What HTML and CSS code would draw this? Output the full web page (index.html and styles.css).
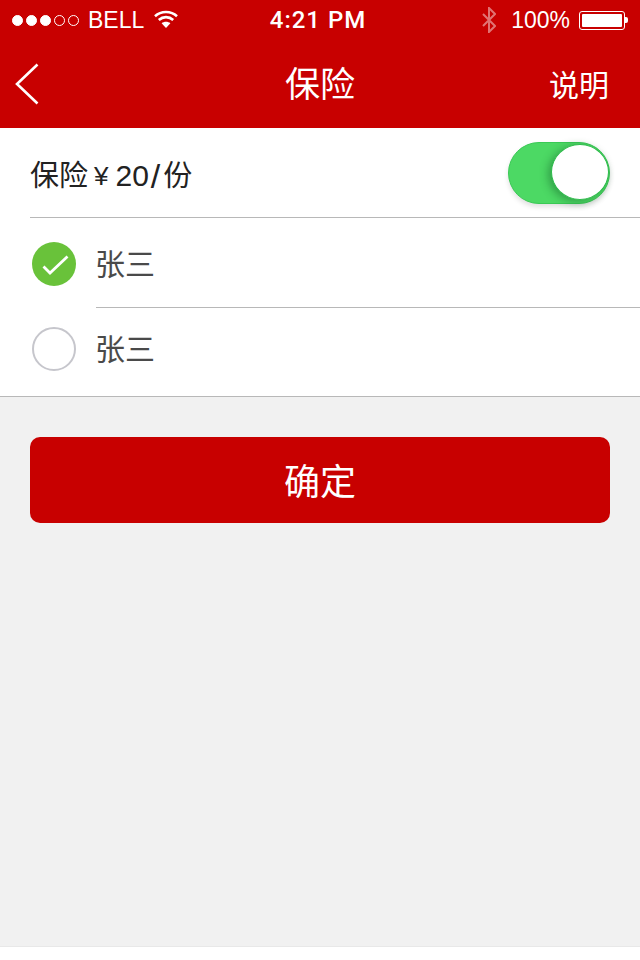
FILE: index.html
```html
<!DOCTYPE html>
<html lang="zh-CN">

<head>
    <meta charset="UTF-8" />
    <meta name="viewport" content="width=device-width, initial-scale=1.0" />
    <title>保险</title>
    <link rel="stylesheet" href="styles.css">
</head>

<body>
    <header class="header">
        <div class="status-bar">
            <div class="status-left">
                <div class="signal">
                    <span class="dot on"></span>
                    <span class="dot on"></span>
                    <span class="dot on"></span>
                    <span class="dot"></span>
                    <span class="dot"></span>
                </div>
                <span class="carrier">BELL</span>
                <svg class="wifi" width="24" height="18" viewBox="0 0 24 18">
                    <path d="M1 6.2C7 .6 17 .6 23 6.2" fill="none" stroke="#fff" stroke-width="2.6" />
                    <path d="M4.8 10C9 6.2 15 6.2 19.2 10" fill="none" stroke="#fff" stroke-width="2.6" />
                    <path d="M12 18L7.6 13.2C10 11.2 14 11.2 16.4 13.2Z" fill="#fff" />
                </svg>
            </div>
            <div class="time">4:21 PM</div>
            <div class="status-right">
                <svg class="bluetooth" width="14" height="26" viewBox="0 0 14 26">
                    <path d="M1 7L13 19L7 25V1L13 7L1 19" fill="none" stroke="#fff" stroke-width="2" />
                </svg>
                <span class="percent">100%</span>
                <div class="battery">
                    <div class="battery-body"><div class="battery-fill"></div></div>
                    <div class="battery-nub"></div>
                </div>
            </div>
        </div>
        <nav class="nav-bar">
            <svg class="back" width="24" height="42" viewBox="0 0 24 42">
                <path d="M22.5 1.5L2 21L22.5 40.5" fill="none" stroke="#fff" stroke-width="2.6" />
            </svg>
            <h1 class="title">保险</h1>
            <a class="nav-action">说明</a>
        </nav>
    </header>

    <main class="page">
        <section class="list">
            <div class="insurance-row">
                <div class="insurance-label">
                    <span>保险</span>
                    <span class="yen">¥</span>
                    <span class="price">20</span>
                    <span class="slash">/</span>
                    <span>份</span>
                </div>
                <div class="toggle"><div class="knob"></div></div>
            </div>
            <div class="person-row">
                <span class="check checked">
                    <svg width="44" height="44" viewBox="0 0 44 44">
                        <path d="M11.5 24.5L18 31L35.5 14.5" fill="none" stroke="#fff" stroke-width="2.8" />
                    </svg>
                </span>
                <span class="person-name">张三</span>
            </div>
            <div class="person-row last">
                <span class="check"></span>
                <span class="person-name">张三</span>
            </div>
        </section>
        <button class="confirm">确定</button>
    </main>
</body>

</html>
```

FILE: styles.css
```css
* {
    box-sizing: border-box;
}

body {
    margin: 0;
    background-color: #fff;
    font-family: "Liberation Sans", "Noto Sans CJK SC", sans-serif;
    color: #1f1f1f;
}

.header {
    background-color: #c80000;
    color: #fff;
    height: 128px;
}

.status-bar {
    height: 40px;
    display: grid;
    grid-template-columns: 1fr auto 1fr;
    align-items: center;
    padding: 0 12px;
}

.status-left,
.status-right {
    display: flex;
    align-items: center;
}

.status-right {
    justify-content: flex-end;
}

.signal {
    display: flex;
    gap: 3px;
}

.dot {
    width: 11px;
    height: 11px;
    border: 1px solid #fff;
    border-radius: 50%;
}

.dot.on {
    background-color: #fff;
}

.carrier {
    font-size: 23px;
    margin-left: 9px;
}

.wifi {
    margin-left: 10px;
    margin-bottom: 2px;
}

.time {
    font-family: Roboto, sans-serif;
    font-weight: 500;
    font-size: 24px;
    letter-spacing: 1px;
    margin-right: 4px;
}

.bluetooth {
    opacity: 0.45;
    margin-right: 15px;
}

.percent {
    font-size: 23px;
    margin-right: 9px;
}

.battery {
    display: flex;
    align-items: center;
}

.battery-body {
    width: 46px;
    height: 19px;
    border: 1px solid #fff;
    border-radius: 3px;
    padding: 2px;
}

.battery-fill {
    height: 100%;
    background-color: #fff;
    border-radius: 1px;
}

.battery-nub {
    width: 3px;
    height: 6px;
    background-color: #fff;
    border-radius: 0 2px 2px 0;
}

.nav-bar {
    height: 88px;
    display: grid;
    grid-template-columns: 1fr auto 1fr;
    align-items: center;
    padding: 0 31px 0 15px;
}

.back {
    margin-top: -1px;
}

.title {
    margin: 0 0 0 16px;
    font-size: 35px;
    font-weight: 400;
    line-height: 1;
}

.nav-action {
    justify-self: end;
    margin-top: 4px;
    font-size: 30px;
    line-height: 1;
}

.page {
    height: 819px;
    background-color: #f1f1f1;
    border-bottom: 1px solid #e8e8e8;
    display: flex;
    flex-direction: column;
}

.list {
    background-color: #fff;
    border-bottom: 1px solid #b8b8b8;
}

.insurance-row {
    height: 90px;
    margin-left: 30px;
    padding-right: 30px;
    border-bottom: 1px solid #b8b8b8;
    display: flex;
    align-items: center;
    justify-content: space-between;
}

.insurance-label {
    display: flex;
    align-items: center;
    margin-top: 7px;
    font-size: 29px;
    line-height: 1;
    color: #222;
}

.yen {
    margin: 0 7px 0 6px;
    font-size: 26px;
}

.price {
    font-size: 30px;
}

.slash {
    margin: 0 3px 0 2px;
    font-size: 34px;
}

.toggle {
    width: 102px;
    height: 62px;
    margin-top: 1px;
    background-color: #4cd964;
    border: 1px solid #3ac955;
    border-radius: 31px;
    padding: 1px 0 4px 42px;
    box-shadow: 0 3px 5px rgba(0, 0, 0, 0.12);
}

.knob {
    width: 58px;
    height: 56px;
    background-color: #fff;
    border: 1px solid #2dbb4a;
    border-radius: 50%;
    box-shadow: -3px 2px 8px rgba(20, 90, 40, 0.45);
}

.person-row {
    display: flex;
    align-items: center;
    padding-left: 32px;
}

.check {
    width: 44px;
    height: 44px;
    flex-shrink: 0;
    margin-top: 2px;
    border: 2px solid #c6c6cc;
    border-radius: 50%;
}

.check.checked {
    background-color: #69c23a;
    border: none;
}

.check svg {
    display: block;
}

.person-name {
    flex: 1;
    height: 90px;
    margin-left: 20px;
    border-bottom: 1px solid #b8b8b8;
    font-size: 30px;
    line-height: 93px;
    text-indent: -1px;
    color: #4a4a4a;
}

.person-row.last .check {
    margin-top: -6px;
}

.person-row.last .person-name {
    height: 88px;
    border-bottom: none;
    line-height: 83px;
}

.confirm {
    margin: 40px 30px 0;
    padding-bottom: 4px;
    height: 86px;
    flex-shrink: 0;
    background-color: #c80000;
    color: #fff;
    border: none;
    border-radius: 10px;
    font-family: inherit;
    font-size: 36px;
}
```
